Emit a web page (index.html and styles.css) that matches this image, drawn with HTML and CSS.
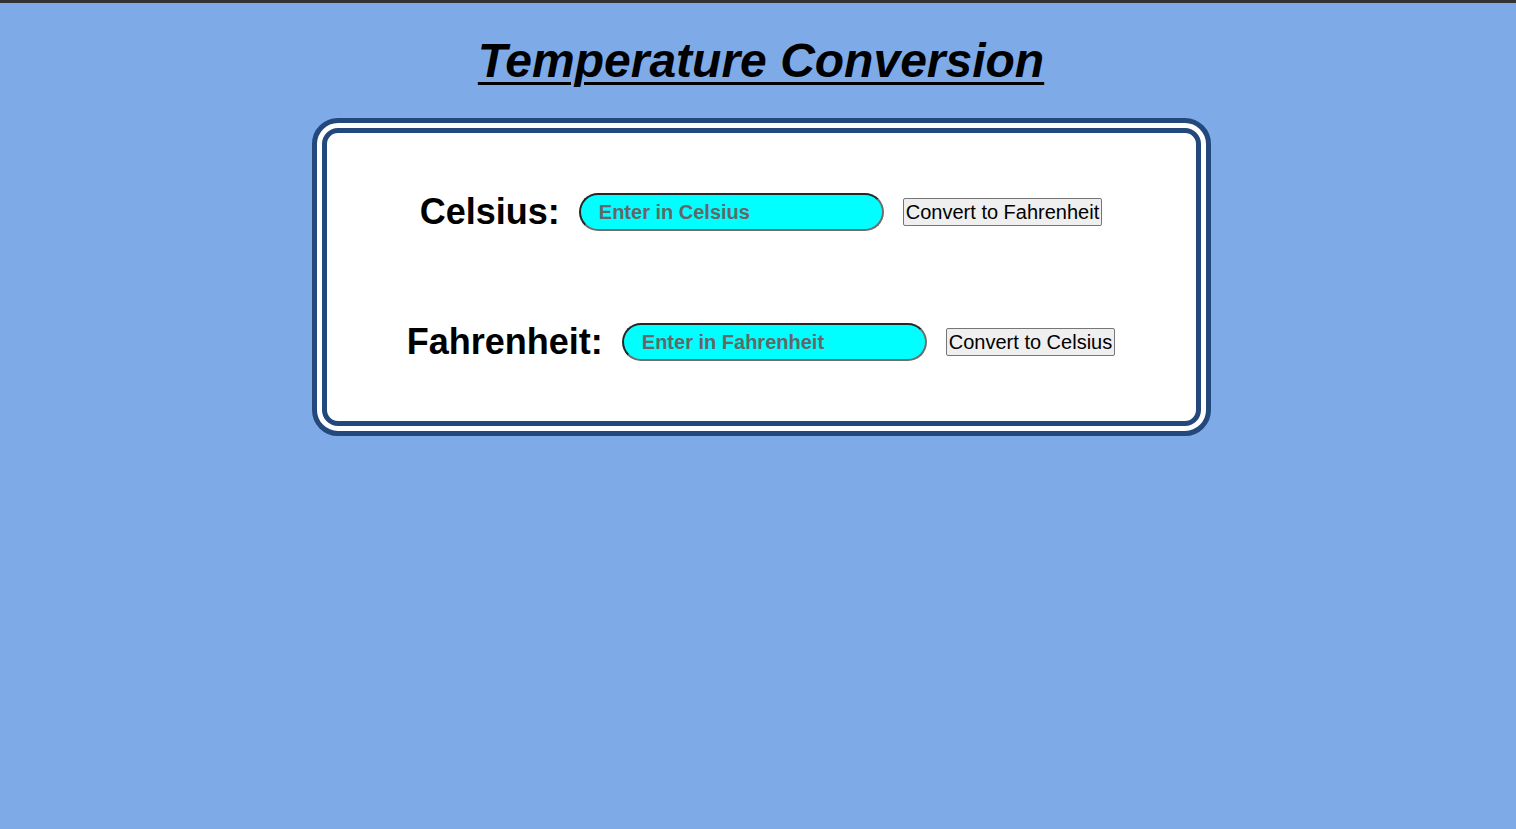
FILE: index.html
```html
<!DOCTYPE html>
<html lang="en">
<head>
<meta charset="utf-8">
<title>Temperature Conversion</title>
<link rel="stylesheet" href="styles.css">
</head>
<body>
<div class="topbar"></div>
<main class="page">
  <h1 class="title">Temperature Conversion</h1>
  <section class="card">
    <div class="row">
      <label class="label" for="c">Celsius:</label>
      <input class="field" id="c" type="text" placeholder="Enter in Celsius">
      <button class="btn" type="button">Convert to Fahrenheit</button>
    </div>
    <div class="row">
      <label class="label" for="f">Fahrenheit:</label>
      <input class="field" id="f" type="text" placeholder="Enter in Fahrenheit">
      <button class="btn" type="button">Convert to Celsius</button>
    </div>
  </section>
</main>
</body>
</html>
```

FILE: styles.css
```css
html, body {
  margin: 0;
  padding: 0;
}
body {
  background: #7eabe8;
  font-family: "Liberation Sans", Arial, sans-serif;
  min-height: 829px;
}
.topbar {
  height: 3px;
  background: #333;
}
.page {
  padding: 0 1px 0 7px;
  display: flex;
  flex-direction: column;
  align-items: center;
}
.title {
  margin: 30px 0 0;
  font-size: 48px;
  line-height: 56px;
  font-style: italic;
  font-weight: bold;
  text-decoration: underline;
  text-decoration-thickness: 3px;
  text-underline-offset: 5px;
  color: #000;
}
.card {
  box-sizing: border-box;
  margin-top: 29px;
  width: 899px;
  height: 318px;
  border: 15px double #22487c;
  border-radius: 26px;
  background: #fff;
  padding: 60px 0 0;
  display: flex;
  flex-direction: column;
  gap: 92px;
}
.row {
  display: flex;
  justify-content: center;
  align-items: center;
  gap: 19px;
  height: 38px;
}
.label {
  font-size: 36px;
  font-weight: bold;
  color: #000;
}
.field {
  box-sizing: border-box;
  width: 305px;
  height: 38px;
  border: 2px solid;
  border-color: #262626 #6e6e6e #6e6e6e #262626;
  border-radius: 19px;
  background: #00ffff;
  padding: 0 18px;
  font-family: "Liberation Sans", Arial, sans-serif;
  font-size: 20px;
  font-weight: bold;
  color: #000;
  outline: none;
}
.field::placeholder {
  color: #666;
  opacity: 1;
}
.btn {
  box-sizing: border-box;
  height: 28px;
  padding: 0 2px;
  font-family: "Liberation Sans", Arial, sans-serif;
  font-size: 20px;
  color: #000;
  background: #efefef;
  border: 1px solid #767676;
  border-radius: 2px;
}
```
